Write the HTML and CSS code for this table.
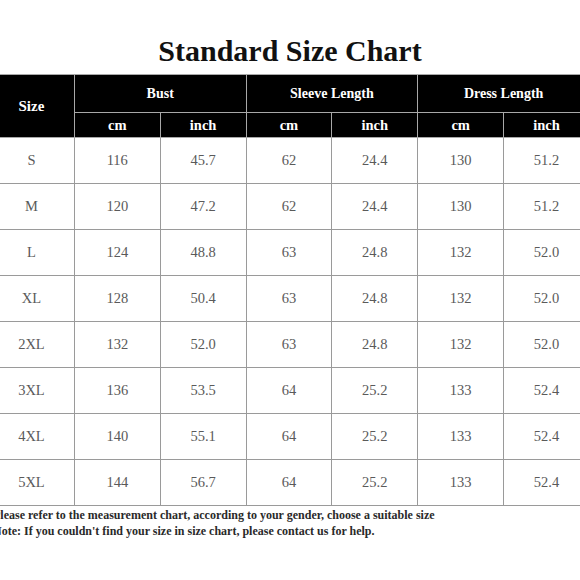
FILE: index.html
```html
<!DOCTYPE html>
<html>
<head>
<meta charset="utf-8">
<link rel="stylesheet" href="styles.css">
</head>
<body>
<div class="page">
  <h1 class="title">Standard Size Chart</h1>
  <table class="chart">
    <colgroup>
      <col><col><col><col><col><col><col>
    </colgroup>
    <thead>
      <tr class="head1">
        <th rowspan="2">Size</th>
        <th colspan="2">Bust</th>
        <th colspan="2">Sleeve Length</th>
        <th colspan="2">Dress Length</th>
      </tr>
      <tr class="head2">
        <th>cm</th><th>inch</th><th>cm</th><th>inch</th><th>cm</th><th>inch</th>
      </tr>
    </thead>
    <tbody>
      <tr><td>S</td><td>116</td><td>45.7</td><td>62</td><td>24.4</td><td>130</td><td>51.2</td></tr>
      <tr><td>M</td><td>120</td><td>47.2</td><td>62</td><td>24.4</td><td>130</td><td>51.2</td></tr>
      <tr><td>L</td><td>124</td><td>48.8</td><td>63</td><td>24.8</td><td>132</td><td>52.0</td></tr>
      <tr><td>XL</td><td>128</td><td>50.4</td><td>63</td><td>24.8</td><td>132</td><td>52.0</td></tr>
      <tr><td>2XL</td><td>132</td><td>52.0</td><td>63</td><td>24.8</td><td>132</td><td>52.0</td></tr>
      <tr><td>3XL</td><td>136</td><td>53.5</td><td>64</td><td>25.2</td><td>133</td><td>52.4</td></tr>
      <tr><td>4XL</td><td>140</td><td>55.1</td><td>64</td><td>25.2</td><td>133</td><td>52.4</td></tr>
      <tr><td>5XL</td><td>144</td><td>56.7</td><td>64</td><td>25.2</td><td>133</td><td>52.4</td></tr>
    </tbody>
  </table>
  <div class="notes">
    <p>Please refer to the measurement chart, according to your gender, choose a suitable size</p>
    <p>Note: If you couldn't find your size in size chart, please contact us for help.</p>
  </div>
</div>
</body>
</html>
```
FILE: styles.css
```css
html, body {
  margin: 0;
  padding: 0;
  background: #fff;
}
body {
  width: 580px;
  height: 580px;
  overflow: hidden;
  font-family: "Liberation Serif", "Times New Roman", serif;
}
.page {
  width: 580px;
  padding-top: 34px;
}
.title {
  margin: 0;
  height: 40px;
  font-size: 30px;
  line-height: 34px;
  font-weight: bold;
  text-align: center;
  color: #111;
}
.chart {
  margin-left: -12px;
  width: 602px;
  table-layout: fixed;
  border-collapse: collapse;
}
.chart th {
  background: #000;
  color: #fff;
  font-weight: bold;
  font-size: 14px;
  border: 1px solid #a8a8a8;
  padding: 0;
  text-align: center;
}
.head1 th {
  height: 37px;
}
.head1 th:first-child {
  font-size: 15px;
}
.head2 th {
  height: 24px;
  font-size: 14.5px;
}
.chart td {
  height: 45px;
  padding: 0;
  text-align: center;
  font-size: 14.5px;
  color: #5a5a5a;
  border: 1px solid #9a9a9a;
}
.notes {
  margin-left: -7px;
  padding-top: 1px;
}
.notes p {
  margin: 0;
  font-size: 12px;
  line-height: 16px;
  font-weight: bold;
  color: #2a2a2a;
  white-space: nowrap;
}
```
